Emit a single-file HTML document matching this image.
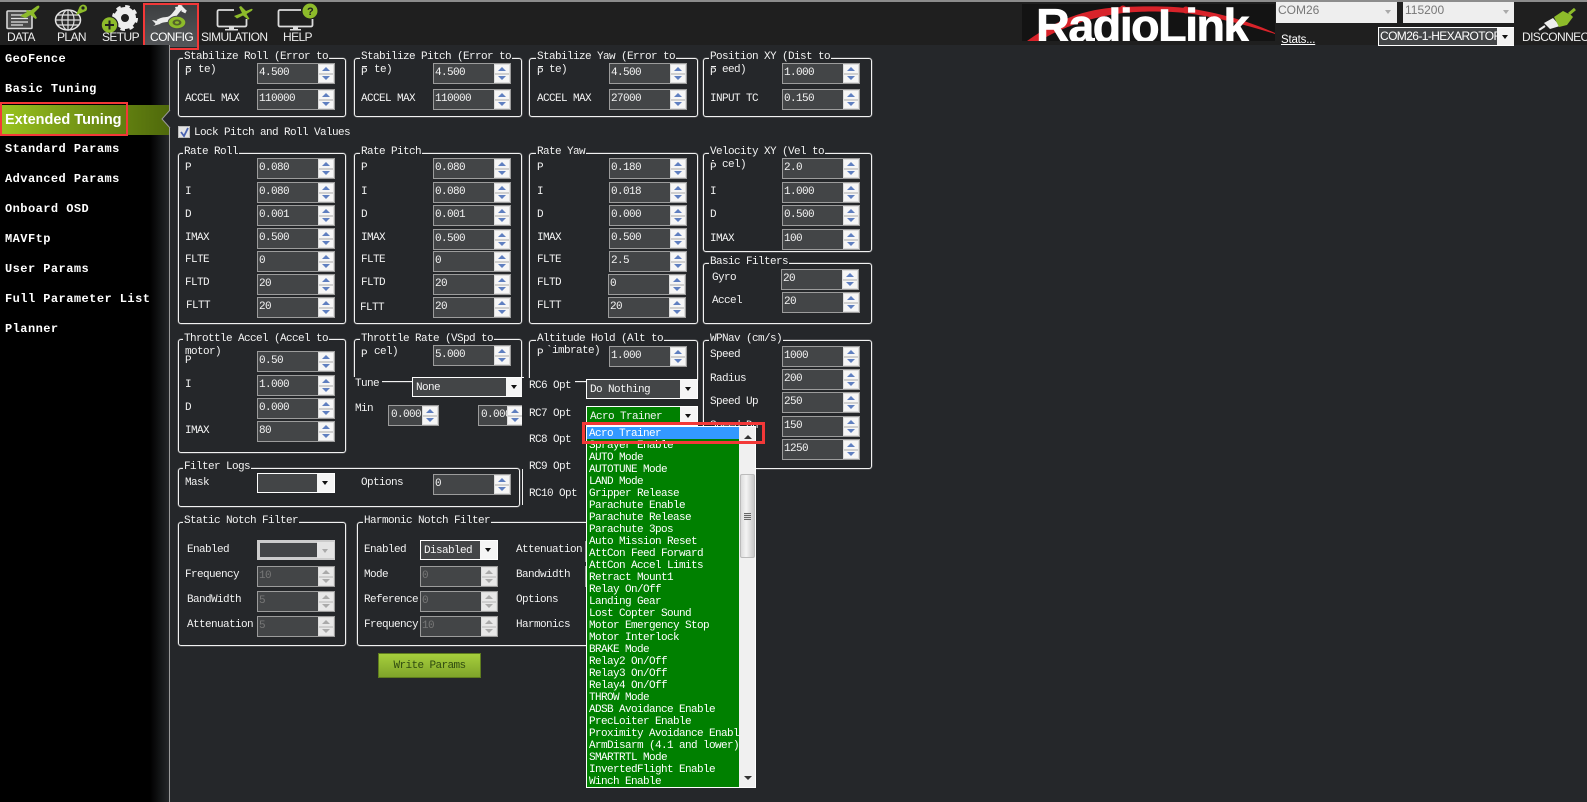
<!DOCTYPE html>
<html>
<head>
<meta charset="utf-8">
<style>
html,body{margin:0;padding:0;background:#25272a}
body{position:relative;width:1587px;height:802px;overflow:hidden;font-family:"Liberation Mono",monospace;font-size:11px;letter-spacing:-.6px;color:#f2f2f2}
div,span{position:absolute;box-sizing:border-box;white-space:nowrap}
.g{border:1px solid #f2f2f2;border-radius:3px;box-shadow:0 0 1px #fff}
.h{background:#25272a;line-height:12px;height:12px;padding:0 1px;margin-top:1px}
.l{line-height:14px;height:14px;margin-top:1px}
.s{width:78px;height:21px;border:1px solid #9c9c9c;background:#434547;color:#f4f4f4;line-height:19px;padding-left:1px}
.s i{position:absolute;right:0;top:0;width:16px;height:19px;background:linear-gradient(#f6f6f6 0,#f6f6f6 8px,#a9a9a9 9px,#f6f6f6 10px,#f6f6f6 19px);border:1px solid #ddd;box-sizing:border-box}
.s i:before,.s i:after{content:"";position:absolute;left:3px;border-left:4px solid transparent;border-right:4px solid transparent}
.s i:before{top:2px;border-bottom:4px solid #5f7fc0}
.s i:after{top:11px;border-top:4px solid #5f7fc0}
.d{color:#777}
.d i{background:linear-gradient(#e8e8e8 0,#e8e8e8 8px,#b5b5b5 9px,#e8e8e8 10px,#e8e8e8 19px)}
.d i:before{border-bottom-color:#aaa}.d i:after{border-top-color:#aaa}
.c{border:1px solid #fff;background:#434547;color:#f4f4f4;line-height:20px;padding-left:3px;height:20px}
.c i{position:absolute;right:0;top:0;width:17px;height:18px;background:#f5f5f5}
.c i:after{content:"";position:absolute;left:5px;top:7px;border-left:3.5px solid transparent;border-right:3.5px solid transparent;border-top:4px solid #111}
.cd i:after{border-top-color:#aaa}
.t{font-family:"Liberation Sans",sans-serif;color:#eee;font-size:12px;letter-spacing:-.6px;line-height:14px}
.m{font-weight:bold;font-size:12px;letter-spacing:.45px;color:#fff;left:5px;line-height:14px;height:14px}
.o{left:2px;right:0;height:12px;line-height:12px;color:#fff;overflow:hidden;margin-top:1px}
.b{background:#f2f2f2;height:1px}
</style>
</head>
<body>

<!-- toolbar -->
<div style="left:0;top:0;width:1587px;height:45px;background:#1f1f1f"></div>
<div style="left:0;top:0;width:1587px;height:2px;background:#8c8c8c"></div>
<div style="left:145px;top:5px;width:52px;height:42px;background:linear-gradient(#3d3f41,#55575a)"></div>

<svg style="position:absolute;left:0;top:0" width="330" height="34" viewBox="0 0 330 34">
 <!-- DATA -->
 <rect x="7" y="11" width="25" height="17.500" rx="1" fill="#4a4a4a" stroke="#d8d8d8" stroke-width="1.600"/>
 <path d="M11 15h15M11 18.500h17M11 22h17M11 25h12" stroke="#e2e2e2" stroke-width="1.200"/>
 <path d="M19 18l7-4 -1-1 1-1 3 1 7-5c2-1 3 0 2 2l-5 5 3 5-1.500 1-5-4-5 3z" fill="#8dbb2a" transform="translate(1,-2)"/>
 <!-- PLAN -->
 <ellipse cx="68" cy="20" rx="12.500" ry="10" fill="#2c2c2c" stroke="#e5e5e5" stroke-width="1.500"/>
 <ellipse cx="68" cy="20" rx="6" ry="10" fill="none" stroke="#ddd" stroke-width="1.200"/>
 <path d="M68 10v20M55.500 20h25M57.500 15h21M57.500 25h21" stroke="#ddd" stroke-width="1.200"/>
 <path d="M76 15l3-7c1-3 4-4 6-3s3 4 1 6z" fill="#8dbb2a"/>
 <circle cx="83" cy="8" r="1.600" fill="#1f1f1f"/>
 <!-- SETUP -->
 <circle cx="125" cy="18" r="7.500" fill="none" stroke="#eee" stroke-width="7"/>
 <circle cx="125" cy="18" r="11.500" fill="none" stroke="#eee" stroke-width="3" stroke-dasharray="4.500 4.500"/>
 <circle cx="109.500" cy="25" r="8.300" fill="#8dbb2a" stroke="#1f1f1f" stroke-width="1.200"/>
 <path d="M105 25h9M109.500 20.500v9" stroke="#1f1f1f" stroke-width="2"/>
 <!-- CONFIG -->
 <path d="M158 22c6-4 9-1 13-4 4-3 5-6 9-10" fill="none" stroke="#ececec" stroke-width="5"/>
 <path d="M152 20l6 1 2 3-7 2c2-1 3-2 2-3zM175 7l7-1 5 5-3 1-3-2-3 1-2-1z" fill="#ececec"/>
 <path d="M178 6l4 1M182 10l4 2" stroke="#ececec" stroke-width="3"/>
 <ellipse cx="177" cy="22.500" rx="8.800" ry="6.200" fill="#8dbb2a" stroke="#46484a" stroke-width="1"/>
 <ellipse cx="177" cy="22.500" rx="4.500" ry="3" fill="#55622a"/>
 <ellipse cx="177" cy="22.500" rx="2" ry="1.300" fill="#8dbb2a"/>
 <!-- SIM -->
 <path d="M234 10h-15a1.500 1.500 0 0 0-1.500 1.500V25a1.500 1.500 0 0 0 1.500 1.500h26a1.500 1.500 0 0 0 1.500-1.500V19" fill="none" stroke="#dcdcdc" stroke-width="1.800"/>
 <path d="M229 27h5v2h-5zM225 29h13v1.500h-13z" fill="#dcdcdc"/>
 <path d="M234 16l8-3-3-6 2-1 5 5 5-2c2-.5 2 1 .5 2l-5 3 3 5-1.500.5-5-4-6 3z" fill="#8dbb2a"/>
 <!-- HELP -->
 <path d="M301 10h-21a1.500 1.500 0 0 0-1.500 1.500V25a1.500 1.500 0 0 0 1.500 1.500h31a1.500 1.500 0 0 0 1.500-1.500V19" fill="none" stroke="#dcdcdc" stroke-width="1.800"/>
 <path d="M293 27h5v2h-5zM290 29h11v1.500h-11z" fill="#dcdcdc"/>
 <circle cx="310" cy="11" r="7.500" fill="#8dbb2a"/>
 <text x="307" y="15" font-family="Liberation Sans" font-weight="bold" font-size="11" fill="#1f1f1f">?</text>
</svg>

<div class="t" style="left:7px;top:30px;color:#eee">DATA</div>
<div class="t" style="left:57px;top:30px;color:#eee">PLAN</div>
<div class="t" style="left:102px;top:30px;color:#eee">SETUP</div>
<div class="t" style="left:150px;top:30px;color:#fff">CONFIG</div>
<div class="t" style="left:201px;top:30px;color:#eee">SIMULATION</div>
<div class="t" style="left:283px;top:30px;color:#eee">HELP</div>
<div style="left:143px;top:3px;width:56px;height:47px;border:2px solid #f33838"></div>

<!-- logo -->
<div style="left:1022px;top:4px;width:253px;height:37px;background:#131313;overflow:hidden">
 <svg style="position:absolute;left:0;top:0" width="253" height="37">
  <path d="M5 37C40 12 70 4 101 3c25-1 45-1 63 1 35 5 65 14 89 25v1c-28-9-60-17-89-21-20-2-43-2-63 0-32 4-60 14-84 28z" fill="#d8232a"/>
  <circle cx="101" cy="5" r="3.500" fill="#d8232a"/><circle cx="164" cy="6" r="3.500" fill="#d8232a"/>
 </svg>
 <div style="left:14px;top:-5px;font:bold 47px/54px 'Liberation Sans',sans-serif;letter-spacing:-1.700px;color:#fff;-webkit-text-stroke:.6px #fff">RadioLink</div>
</div>

<!-- connection -->
<div style="left:1276px;top:2px;width:121px;height:21px;background:#eee;color:#777;font:12px/17px 'Liberation Sans',sans-serif;padding-left:2px;letter-spacing:0">COM26</div>
<div style="left:1385px;top:10px;border-left:3.500px solid transparent;border-right:3.500px solid transparent;border-top:4px solid #aaa"></div>
<div style="left:1403px;top:2px;width:111px;height:21px;background:#eee;color:#777;font:12px/17px 'Liberation Sans',sans-serif;padding-left:2px;letter-spacing:0">115200</div>
<div style="left:1503px;top:10px;border-left:3.500px solid transparent;border-right:3.500px solid transparent;border-top:4px solid #aaa"></div>
<div style="left:1281px;top:33px;color:#fff;font:11.500px/14px 'Liberation Sans',sans-serif;letter-spacing:-.2px;text-decoration:underline">Stats...</div>
<div style="left:1378px;top:27px;width:136px;height:19px;background:#434547;border:1px solid #fff;color:#fff;font:12px/16px 'Liberation Sans',sans-serif;padding-left:1px;letter-spacing:-.6px;overflow:hidden">COM26-1-HEXAROTOF</div>
<div style="left:1497px;top:28px;width:17px;height:17px;background:#f2f2f2"></div>
<div style="left:1502px;top:35px;border-left:3.500px solid transparent;border-right:3.500px solid transparent;border-top:4px solid #111"></div>
<div class="t" style="left:1522px;top:30px;color:#eee">DISCONNECT</div>
<svg style="position:absolute;left:1536px;top:8px" width="44" height="24">
 <path d="M3 22l6-4" stroke="#eee" stroke-width="2"/>
 <path d="M8 15l9-5 7 8-10 3z" fill="#eee"/>
 <path d="M18 9l9-6 8 4 2 2-6 8-8 2z" fill="#8dbb2a"/>
 <path d="M33 6l6-5" stroke="#8dbb2a" stroke-width="3"/>
</svg>

<!-- sidebar -->
<div style="left:0;top:45px;width:170px;height:757px;background:linear-gradient(90deg,#000 0,#000 150px,#25272a 169px)"></div>
<div style="left:0;top:105px;width:169px;height:30px;background:linear-gradient(90deg,#9ac41f 0,#7da018 60px,#4f690b 169px)"></div>
<div style="left:169px;top:45px;width:1px;height:757px;background:#9a9a9a"></div>
<svg style="position:absolute;left:161px;top:110px" width="10" height="18"><path d="M9 0L1 9l8 9" fill="#25272a" stroke="#9a9a9a" stroke-width="1"/></svg>

<div class="m" style="top:52px">GeoFence</div>
<div class="m" style="top:82px">Basic Tuning</div>
<div style="left:5px;top:112px;font:bold 14.500px/16px 'Liberation Sans',sans-serif;letter-spacing:0;color:#fff">Extended Tuning</div>
<div class="m" style="top:142px">Standard Params</div>
<div class="m" style="top:172px">Advanced Params</div>
<div class="m" style="top:202px">Onboard OSD</div>
<div class="m" style="top:232px">MAVFtp</div>
<div class="m" style="top:262px">User Params</div>
<div class="m" style="top:292px">Full Parameter List</div>
<div class="m" style="top:322px">Planner</div>
<div style="left:0;top:102px;width:128px;height:34px;border:2px solid #f33838"></div>

<!-- Stabilize row -->
<div class="g" style="left:178px;top:58px;width:168px;height:59px"></div>
<div class="h" style="left:183px;top:50px">Stabilize Roll (Error to</div>
<div class="l" style="left:198px;top:62px">te)</div><div class="l" style="left:185px;top:65px">P</div><div class="b" style="left:186px;top:66px;width:5px"></div>
<div class="s" style="left:257px;top:63px">4.500<i></i></div>
<div class="l" style="left:185px;top:91px">ACCEL MAX</div>
<div class="s" style="left:257px;top:89px">110000<i></i></div>

<div class="g" style="left:354px;top:58px;width:168px;height:59px"></div>
<div class="h" style="left:360px;top:50px">Stabilize Pitch (Error to</div>
<div class="l" style="left:374px;top:62px">te)</div><div class="l" style="left:361px;top:65px">P</div><div class="b" style="left:362px;top:66px;width:5px"></div>
<div class="s" style="left:433px;top:63px">4.500<i></i></div>
<div class="l" style="left:361px;top:91px">ACCEL MAX</div>
<div class="s" style="left:433px;top:89px">110000<i></i></div>

<div class="g" style="left:529px;top:58px;width:169px;height:59px"></div>
<div class="h" style="left:536px;top:50px">Stabilize Yaw (Error to</div>
<div class="l" style="left:549px;top:62px">te)</div><div class="l" style="left:537px;top:65px">P</div><div class="b" style="left:538px;top:66px;width:5px"></div>
<div class="s" style="left:609px;top:63px">4.500<i></i></div>
<div class="l" style="left:537px;top:91px">ACCEL MAX</div>
<div class="s" style="left:609px;top:89px">27000<i></i></div>

<div class="g" style="left:703px;top:58px;width:169px;height:59px"></div>
<div class="h" style="left:709px;top:50px">Position XY (Dist to</div>
<div class="l" style="left:722px;top:62px">eed)</div><div class="l" style="left:710px;top:65px">P</div><div class="b" style="left:711px;top:66px;width:5px"></div>
<div class="s" style="left:782px;top:63px">1.000<i></i></div>
<div class="l" style="left:710px;top:91px">INPUT TC</div>
<div class="s" style="left:782px;top:89px">0.150<i></i></div>

<!-- lock -->
<div style="left:178px;top:126px;width:12px;height:12px;background:#e4e4e4;border:1px solid #bbb"></div>
<svg style="position:absolute;left:179px;top:127px" width="11" height="11"><path d="M2 5l3 4 4-8" fill="none" stroke="#4a63b0" stroke-width="1.800"/></svg>
<div class="l" style="left:194px;top:125px">Lock Pitch and Roll Values</div>

<!-- Rate Roll -->
<div class="g" style="left:178px;top:153px;width:168px;height:171px"></div>
<div class="h" style="left:183px;top:145px">Rate Roll</div>
<div class="l" style="left:185px;top:160px">P</div><div class="s" style="left:257px;top:158px">0.080<i></i></div>
<div class="l" style="left:185px;top:184px">I</div><div class="s" style="left:257px;top:182px">0.080<i></i></div>
<div class="l" style="left:185px;top:207px">D</div><div class="s" style="left:257px;top:205px">0.001<i></i></div>
<div class="l" style="left:185px;top:230px">IMAX</div><div class="s" style="left:257px;top:228px">0.500<i></i></div>
<div class="l" style="left:185px;top:252px">FLTE</div><div class="s" style="left:257px;top:251px">0<i></i></div>
<div class="l" style="left:185px;top:275px">FLTD</div><div class="s" style="left:257px;top:274px">20<i></i></div>
<div class="l" style="left:186px;top:298px">FLTT</div><div class="s" style="left:257px;top:297px">20<i></i></div>

<!-- Rate Pitch -->
<div class="g" style="left:354px;top:153px;width:168px;height:171px"></div>
<div class="h" style="left:360px;top:145px">Rate Pitch</div>
<div class="l" style="left:361px;top:160px">P</div><div class="s" style="left:433px;top:158px">0.080<i></i></div>
<div class="l" style="left:361px;top:184px">I</div><div class="s" style="left:433px;top:182px">0.080<i></i></div>
<div class="l" style="left:361px;top:207px">D</div><div class="s" style="left:433px;top:205px">0.001<i></i></div>
<div class="l" style="left:361px;top:230px">IMAX</div><div class="s" style="left:433px;top:229px">0.500<i></i></div>
<div class="l" style="left:361px;top:252px">FLTE</div><div class="s" style="left:433px;top:251px">0<i></i></div>
<div class="l" style="left:361px;top:275px">FLTD</div><div class="s" style="left:433px;top:274px">20<i></i></div>
<div class="l" style="left:360px;top:300px">FLTT</div><div class="s" style="left:433px;top:297px">20<i></i></div>

<!-- Rate Yaw -->
<div class="g" style="left:529px;top:153px;width:169px;height:171px"></div>
<div class="h" style="left:536px;top:145px">Rate Yaw</div>
<div class="l" style="left:537px;top:160px">P</div><div class="s" style="left:609px;top:158px">0.180<i></i></div>
<div class="l" style="left:537px;top:184px">I</div><div class="s" style="left:609px;top:182px">0.018<i></i></div>
<div class="l" style="left:537px;top:207px">D</div><div class="s" style="left:609px;top:205px">0.000<i></i></div>
<div class="l" style="left:537px;top:230px">IMAX</div><div class="s" style="left:609px;top:228px">0.500<i></i></div>
<div class="l" style="left:537px;top:252px">FLTE</div><div class="s" style="left:609px;top:251px">2.5<i></i></div>
<div class="l" style="left:537px;top:275px">FLTD</div><div class="s" style="left:608px;top:274px">0<i></i></div>
<div class="l" style="left:537px;top:298px">FLTT</div><div class="s" style="left:608px;top:297px">20<i></i></div>

<!-- Velocity -->
<div class="g" style="left:703px;top:153px;width:169px;height:99px"></div>
<div class="h" style="left:709px;top:145px">Velocity XY (Vel to</div>
<div class="l" style="left:722px;top:157px">cel)</div><div class="l" style="left:710px;top:160px">P</div><div class="b" style="left:712px;top:160px;width:2px"></div>
<div class="s" style="left:782px;top:158px">2.0<i></i></div>
<div class="l" style="left:710px;top:184px">I</div><div class="s" style="left:782px;top:182px">1.000<i></i></div>
<div class="l" style="left:710px;top:207px">D</div><div class="s" style="left:782px;top:205px">0.500<i></i></div>
<div class="l" style="left:710px;top:231px">IMAX</div><div class="s" style="left:782px;top:229px">100<i></i></div>

<!-- Basic filters -->
<div class="g" style="left:703px;top:263px;width:169px;height:61px"></div>
<div class="h" style="left:709px;top:255px">Basic Filters</div>
<div class="l" style="left:712px;top:270px">Gyro</div><div class="s" style="left:781px;top:269px">20<i></i></div>
<div class="l" style="left:712px;top:293px">Accel</div><div class="s" style="left:782px;top:292px">20<i></i></div>

<!-- Throttle Accel -->
<div class="g" style="left:178px;top:339px;width:168px;height:114px"></div>
<div class="h" style="left:183px;top:332px">Throttle Accel (Accel to</div>
<div class="l" style="left:185px;top:344px">motor)</div>
<div class="l" style="left:185px;top:353px">P</div><div class="s" style="left:257px;top:351px">0.50<i></i></div>
<div class="l" style="left:185px;top:377px">I</div><div class="s" style="left:257px;top:375px">1.000<i></i></div>
<div class="l" style="left:185px;top:400px">D</div><div class="s" style="left:257px;top:398px">0.000<i></i></div>
<div class="l" style="left:185px;top:423px">IMAX</div><div class="s" style="left:257px;top:421px">80<i></i></div>

<!-- Throttle Rate -->
<div class="g" style="left:354px;top:339px;width:168px;height:43px"></div>
<div class="h" style="left:360px;top:332px">Throttle Rate (VSpd to</div>
<div class="l" style="left:374px;top:344px">cel)</div><div class="l" style="left:361px;top:347px">P</div>
<div class="s" style="left:433px;top:345px">5.000<i></i></div>
<div style="left:352px;top:377px;width:30px;height:12px;background:#25272a"></div>
<div class="l" style="left:355px;top:376px">Tune</div>
<div class="c" style="left:412px;top:377px;width:112px">None<i></i></div>
<div class="l" style="left:355px;top:401px">Min</div>
<div class="s" style="left:388px;top:405px;width:51px;padding-left:2px">0.000<i></i></div>
<div class="s" style="left:478px;top:405px;width:46px;padding-left:2px;overflow:hidden">0.000<i></i></div>

<!-- Altitude hold -->
<div class="g" style="left:529px;top:340px;width:169px;height:42px"></div>
<div class="h" style="left:536px;top:332px">Altitude Hold (Alt to</div>
<div class="l" style="left:537px;top:346px">P</div><div class="l" style="left:546px;top:343px">`imbrate)</div>
<div class="s" style="left:609px;top:346px">1.000<i></i></div>
<div style="left:522px;top:378px;width:53px;height:130px;background:#25272a"></div>
<div style="left:522px;top:469px;width:1px;height:36px;background:#eee"></div>
<div class="l" style="left:529px;top:378px">RC6 Opt</div>
<div class="c" style="left:586px;top:379px;width:112px">Do Nothing<i></i></div>
<div class="l" style="left:529px;top:406px">RC7 Opt</div>
<div class="c" style="left:586px;top:406px;width:112px;background:#008000">Acro Trainer<i></i></div>
<div class="l" style="left:529px;top:432px">RC8 Opt</div>
<div class="l" style="left:529px;top:459px">RC9 Opt</div>
<div class="l" style="left:529px;top:486px">RC10 Opt</div>

<!-- WPNav -->
<div class="g" style="left:703px;top:340px;width:169px;height:129px"></div>
<div class="h" style="left:709px;top:332px">WPNav (cm/s)</div>
<div class="l" style="left:710px;top:347px">Speed</div><div class="s" style="left:782px;top:346px">1000<i></i></div>
<div class="l" style="left:710px;top:371px">Radius</div><div class="s" style="left:782px;top:369px">200<i></i></div>
<div class="l" style="left:710px;top:394px">Speed Up</div><div class="s" style="left:782px;top:392px">250<i></i></div>
<div class="l" style="left:710px;top:418px">Speed Dn</div><div class="s" style="left:782px;top:416px">150<i></i></div>
<div class="s" style="left:782px;top:439px">1250<i></i></div>

<!-- Filter Logs -->
<div class="g" style="left:178px;top:468px;width:342px;height:39px"></div>
<div class="h" style="left:183px;top:460px">Filter Logs</div>
<div class="l" style="left:185px;top:475px">Mask</div>
<div class="c" style="left:257px;top:473px;width:78px"><i></i></div>
<div class="l" style="left:361px;top:475px">Options</div>
<div class="s" style="left:433px;top:474px">0<i></i></div>

<!-- Static notch -->
<div class="g" style="left:178px;top:522px;width:168px;height:124px"></div>
<div class="h" style="left:183px;top:514px">Static Notch Filter</div>
<div class="l" style="left:187px;top:542px">Enabled</div>
<div class="c cd" style="left:257px;top:540px;width:78px;border:3px solid #ccc;border-right:1px solid #ccc;background:#434547"><i style="background:#e4e4e4;height:16px;top:-1px"></i></div>
<div class="l" style="left:185px;top:567px">Frequency</div><div class="s d" style="left:257px;top:566px">10<i></i></div>
<div class="l" style="left:187px;top:592px">BandWidth</div><div class="s d" style="left:257px;top:591px">5<i></i></div>
<div class="l" style="left:187px;top:617px">Attenuation</div><div class="s d" style="left:257px;top:616px">5<i></i></div>

<!-- Harmonic notch -->
<div class="g" style="left:357px;top:522px;width:250px;height:124px"></div>
<div class="h" style="left:363px;top:514px">Harmonic Notch Filter</div>
<div class="l" style="left:364px;top:542px">Enabled</div>
<div class="c" style="left:420px;top:540px;width:78px">Disabled<i></i></div>
<div class="l" style="left:364px;top:567px">Mode</div><div class="s d" style="left:420px;top:566px">0<i></i></div>
<div class="l" style="left:364px;top:592px">Reference</div><div class="s d" style="left:420px;top:591px">0<i></i></div>
<div class="l" style="left:364px;top:617px">Frequency</div><div class="s d" style="left:420px;top:616px">10<i></i></div>
<div class="l" style="left:516px;top:542px">Attenuation</div>
<div class="l" style="left:516px;top:567px">Bandwidth</div>
<div class="l" style="left:516px;top:592px">Options</div>
<div class="l" style="left:516px;top:617px">Harmonics</div>
<div style="left:585px;top:541px;width:2px;height:21px;background:#9c9c9c"></div>
<div style="left:585px;top:566px;width:2px;height:21px;background:#9c9c9c"></div>

<!-- write button -->
<div style="left:378px;top:653px;width:103px;height:25px;background:linear-gradient(#a6cf3c,#7fa42a);border:1px solid #5f7d1e;color:#2f4a10;text-align:center;line-height:25px">Write Params</div>

<!-- dropdown -->
<div style="left:586px;top:426px;width:170px;height:362px;background:#f0f0f0;border:1px solid #fff">
 <div style="left:0;top:0;width:152px;height:360px;background:#008000;overflow:hidden">
  <div style="left:0;right:0;top:0;height:12px;background:#3399ff"></div>
  <div class="o" style="top:0">Acro Trainer</div>
  <div class="o" style="top:12px">Sprayer Enable</div>
  <div class="o" style="top:24px">AUTO Mode</div>
  <div class="o" style="top:36px">AUTOTUNE Mode</div>
  <div class="o" style="top:48px">LAND Mode</div>
  <div class="o" style="top:60px">Gripper Release</div>
  <div class="o" style="top:72px">Parachute Enable</div>
  <div class="o" style="top:84px">Parachute Release</div>
  <div class="o" style="top:96px">Parachute 3pos</div>
  <div class="o" style="top:108px">Auto Mission Reset</div>
  <div class="o" style="top:120px">AttCon Feed Forward</div>
  <div class="o" style="top:132px">AttCon Accel Limits</div>
  <div class="o" style="top:144px">Retract Mount1</div>
  <div class="o" style="top:156px">Relay On/Off</div>
  <div class="o" style="top:168px">Landing Gear</div>
  <div class="o" style="top:180px">Lost Copter Sound</div>
  <div class="o" style="top:192px">Motor Emergency Stop</div>
  <div class="o" style="top:204px">Motor Interlock</div>
  <div class="o" style="top:216px">BRAKE Mode</div>
  <div class="o" style="top:228px">Relay2 On/Off</div>
  <div class="o" style="top:240px">Relay3 On/Off</div>
  <div class="o" style="top:252px">Relay4 On/Off</div>
  <div class="o" style="top:264px">THROW Mode</div>
  <div class="o" style="top:276px">ADSB Avoidance Enable</div>
  <div class="o" style="top:288px">PrecLoiter Enable</div>
  <div class="o" style="top:300px">Proximity Avoidance Enable</div>
  <div class="o" style="top:312px">ArmDisarm (4.1 and lower)</div>
  <div class="o" style="top:324px">SMARTRTL Mode</div>
  <div class="o" style="top:336px">InvertedFlight Enable</div>
  <div class="o" style="top:348px">Winch Enable</div>
 </div>
 <div style="left:157px;top:8px;border-left:4px solid transparent;border-right:4px solid transparent;border-bottom:4px solid #333"></div>
 <div style="left:153px;top:47px;width:15px;height:84px;background:linear-gradient(90deg,#dcdcdc,#f4f4f4 40%,#c8c8c8);border:1px solid #bbb;border-radius:2px"></div>
 <div style="left:157px;top:86px;width:7px;height:7px;background:repeating-linear-gradient(#666 0,#666 1px,#ddd 1px,#ddd 2px)"></div>
 <div style="left:157px;top:349px;border-left:4px solid transparent;border-right:4px solid transparent;border-top:4px solid #333"></div>
</div>
<div style="left:582px;top:422px;width:183px;height:22px;border:3px solid #f33838"></div>

</body>
</html>
